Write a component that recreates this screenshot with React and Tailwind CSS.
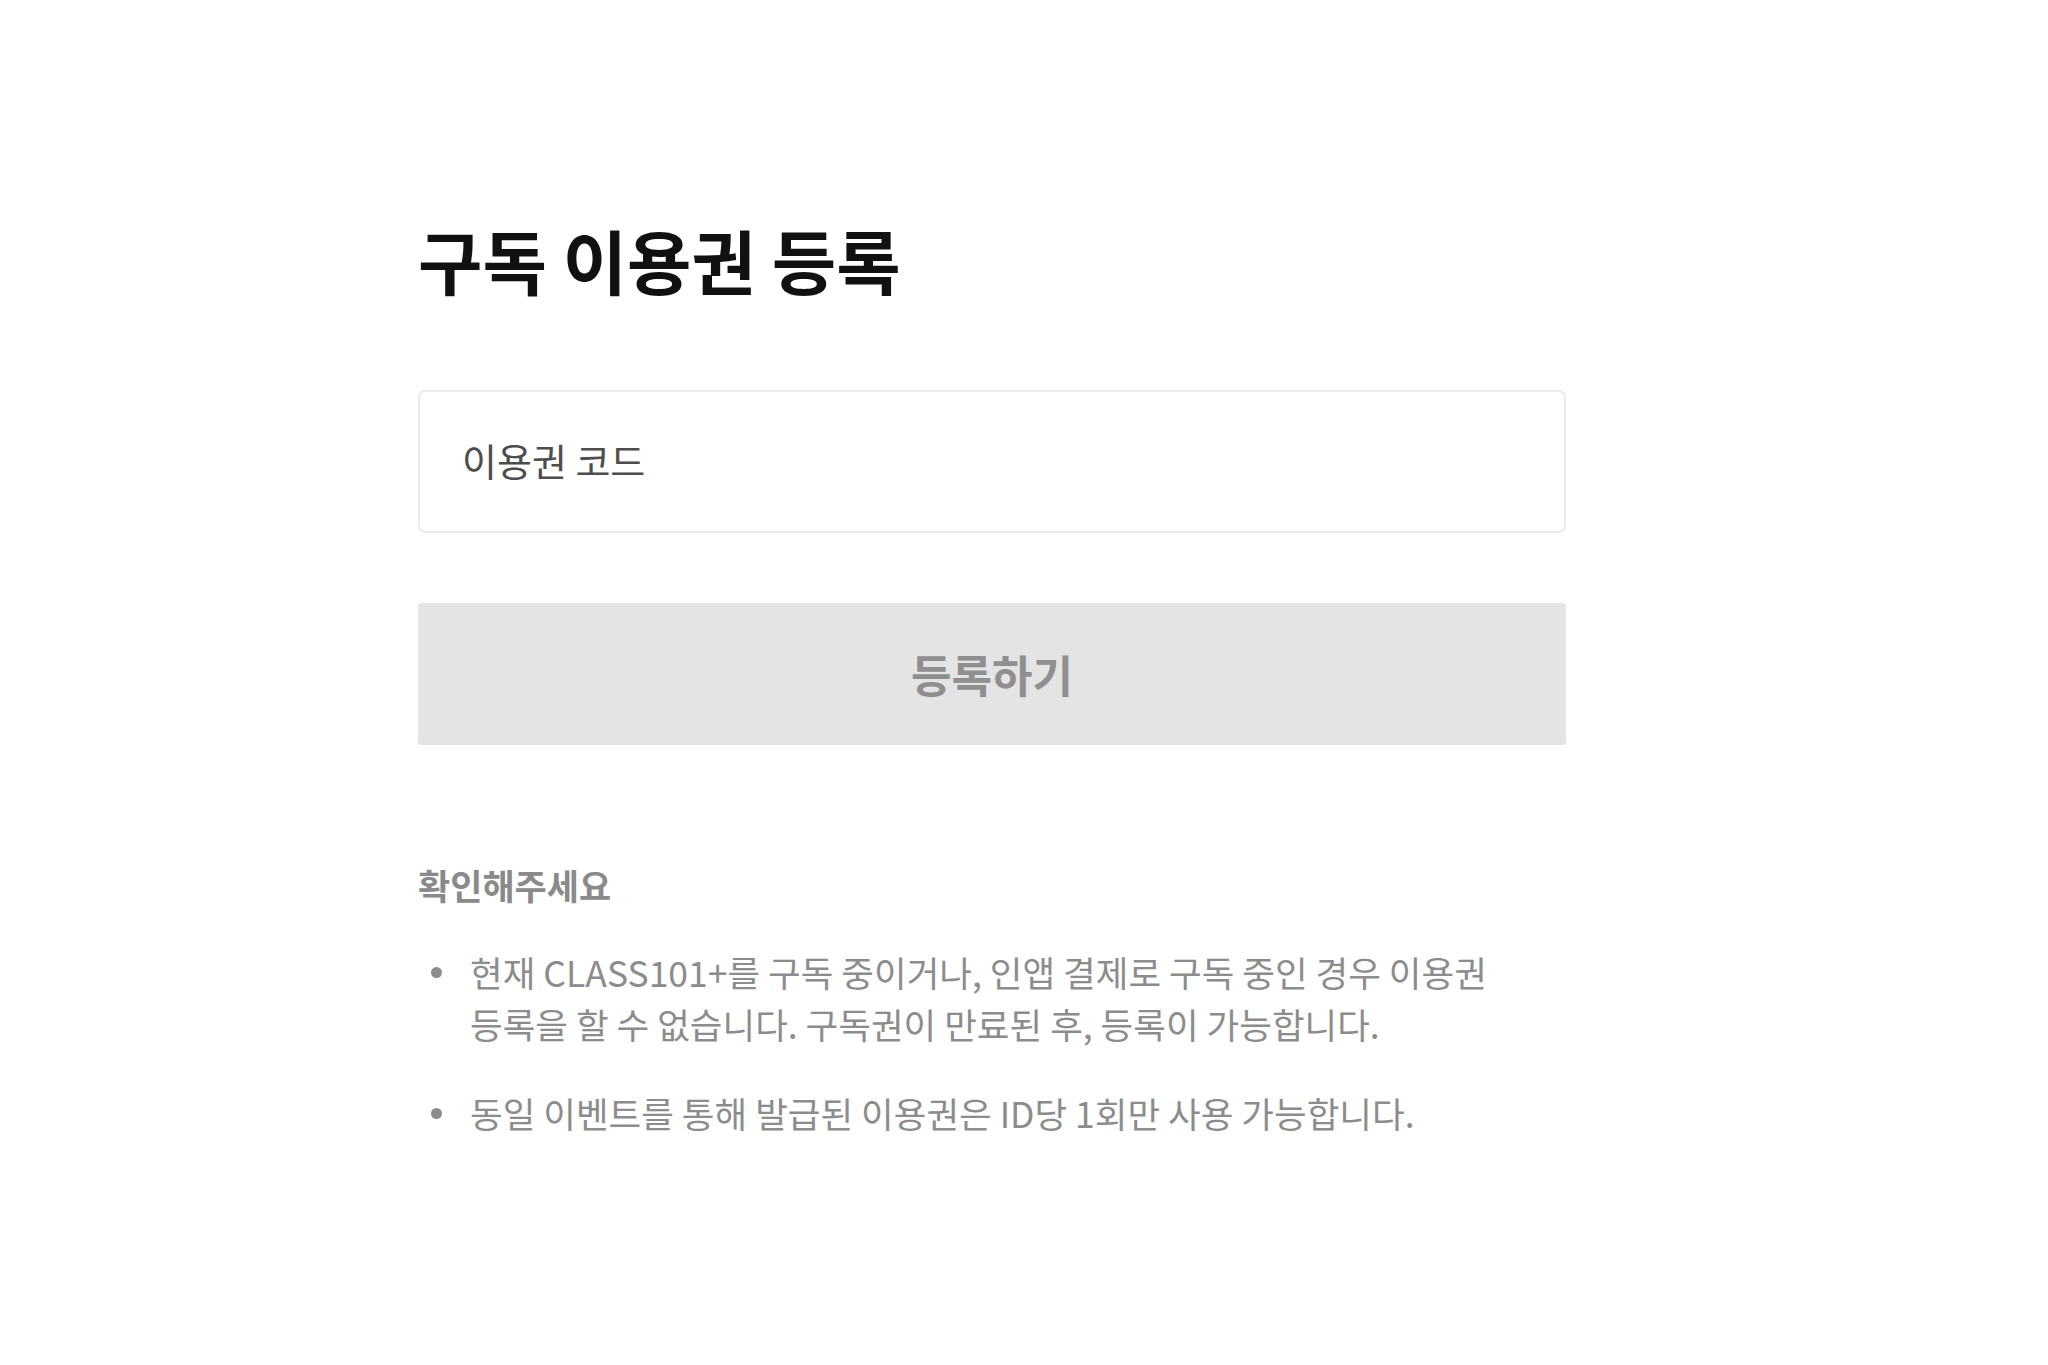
import React from "react";

const notes = [
  "현재 CLASS101+를 구독 중이거나, 인앱 결제로 구독 중인 경우 이용권 등록을 할 수 없습니다. 구독권이 만료된 후, 등록이 가능합니다.",
  "동일 이벤트를 통해 발급된 이용권은 ID당 1회만 사용 가능합니다.",
];

function App() {
  return (
    <div
      className="min-h-screen w-full bg-white pl-[418px] pt-[215px]"
      style={{ fontFamily: '"Noto Sans CJK KR", "Noto Sans", sans-serif' }}
    >
      <div className="w-[1148px]">
        <h1 className="text-[70px] leading-[90px] font-bold text-[#111]">
          구독 이용권 등록
        </h1>

        <div className="mt-[85px] h-[143px] rounded-[7px] border-2 border-[#ebebeb] bg-white flex items-center px-[42px] pb-[4px]">
          <input
            type="text"
            placeholder="이용권 코드"
            className="w-full bg-transparent text-[38px] text-[#333] outline-none placeholder:text-[#4d4d4d]"
          />
        </div>

        <button className="mt-[70px] h-[142px] w-full rounded-[4px] bg-[#e4e4e4] text-[44px] font-bold text-[#8f8f8f]">
          등록하기
        </button>

        <h4 className="mt-[116px] text-[35px] leading-[48px] font-bold text-[#8a8a8a]">
          확인해주세요
        </h4>

        <ul className="mt-[37px] flex flex-col gap-[37px]">
          {notes.map((note, i) => (
            <li key={i} className="flex items-start text-[35.5px] leading-[52px] text-[#8c8c8c]">
              <span className="mt-[21px] ml-[13px] mr-[28px] h-[11px] w-[11px] shrink-0 rounded-full bg-[#8c8c8c]" />
              <span className="w-[1060px] break-keep">{note}</span>
            </li>
          ))}
        </ul>
      </div>
    </div>
  );
}

export default App;
